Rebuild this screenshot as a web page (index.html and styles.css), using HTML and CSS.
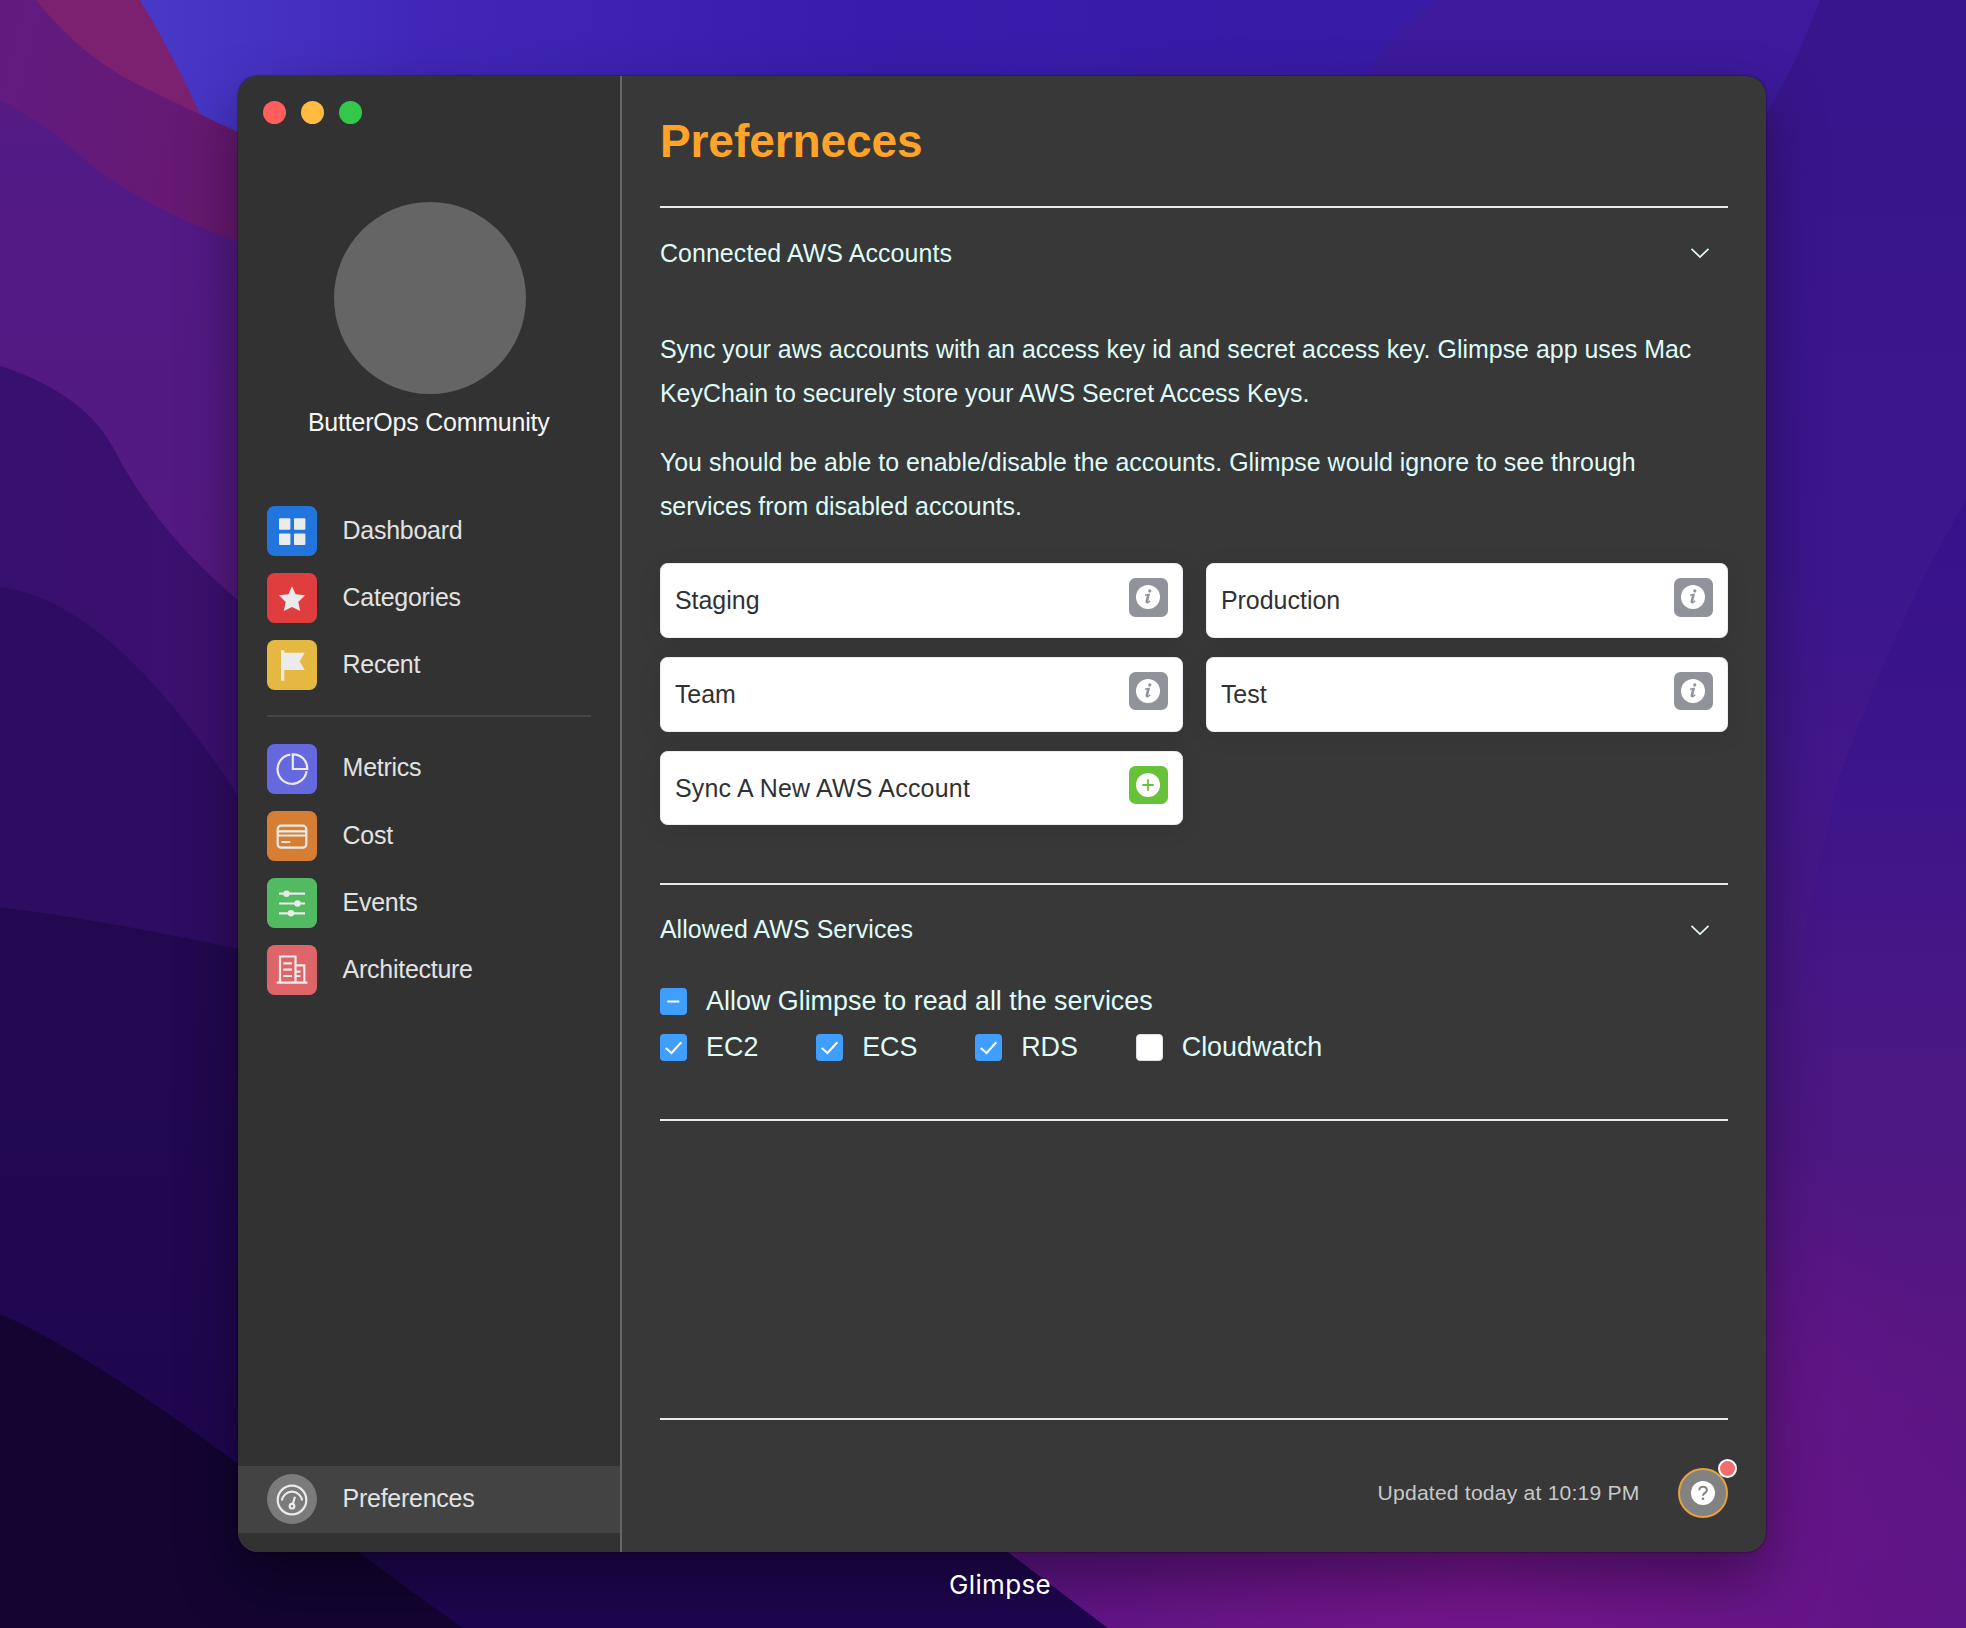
FILE: index.html
```html
<!DOCTYPE html>
<html lang="en">
<head>
<meta charset="utf-8">
<title>Glimpse</title>
<link rel="stylesheet" href="styles.css">
</head>
<body>
<svg class="wallpaper" viewBox="0 0 1966 1628" preserveAspectRatio="none" aria-hidden="true">
  <defs>
    <linearGradient id="sky" x1="0" x2="1" y1="0" y2="0">
      <stop offset="0" stop-color="#4a3acb"/><stop offset=".08" stop-color="#4838c8"/><stop offset=".22" stop-color="#4126b8"/><stop offset=".45" stop-color="#381cac"/><stop offset=".7" stop-color="#371ba6"/><stop offset="1" stop-color="#371ba6"/>
    </linearGradient>
    <linearGradient id="right" gradientUnits="userSpaceOnUse" x1="0" x2="0" y1="0" y2="1628">
      <stop offset="0" stop-color="#38158c"/><stop offset=".35" stop-color="#3c168c"/><stop offset=".5" stop-color="#431789"/><stop offset=".7" stop-color="#4c1782"/><stop offset=".84" stop-color="#5a1683"/><stop offset="1" stop-color="#601487"/>
    </linearGradient>
    <linearGradient id="fold" x1="0" x2="1" y1="0" y2="0">
      <stop offset="0" stop-color="#38138a" stop-opacity=".9"/><stop offset="1" stop-color="#38138a" stop-opacity=".7"/>
    </linearGradient>
    <linearGradient id="foldFade" gradientUnits="userSpaceOnUse" x1="0" x2="0" y1="500" y2="1000">
      <stop offset="0" stop-color="#38128a"/><stop offset=".45" stop-color="#38128a" stop-opacity=".6"/><stop offset="1" stop-color="#38128a" stop-opacity="0"/>
    </linearGradient>
    <linearGradient id="rose" x1="0" x2="1" y1="0" y2=".6">
      <stop offset="0" stop-color="#611b80"/><stop offset="1" stop-color="#691868"/>
    </linearGradient>
    <linearGradient id="violet" x1="0" x2="0" y1="0" y2="1">
      <stop offset="0" stop-color="#601b7e"/><stop offset=".2" stop-color="#521a86"/><stop offset="1" stop-color="#55187e"/>
    </linearGradient>
    <linearGradient id="indigo" x1="0" x2="1" y1="0" y2="0">
      <stop offset="0" stop-color="#38106e"/><stop offset="1" stop-color="#3d1070"/>
    </linearGradient>
    <linearGradient id="deep" x1="0" x2="0" y1="0" y2="1">
      <stop offset="0" stop-color="#22094f"/><stop offset="1" stop-color="#1e0650"/>
    </linearGradient>
    <radialGradient id="glow" gradientUnits="userSpaceOnUse" cx="1480" cy="1560" r="520">
      <stop offset="0" stop-color="#78158f"/><stop offset=".5" stop-color="#6d168a" stop-opacity=".7"/><stop offset="1" stop-color="#621487" stop-opacity="0"/>
    </radialGradient>
  </defs>
  <rect width="1966" height="1628" fill="url(#sky)"/>
  <path d="M1438 0Q1390 30 1366 78V300H1966V0Z" fill="#3c1a9b"/>
  <path d="M1820 0Q1800 55 1772 104L1700 240V1628H1966V0Z" fill="url(#right)"/>
  <path d="M1966 500Q1900 610 1838 780L1790 1000H1966Z" fill="url(#foldFade)"/>
  <path d="M0 0H140Q175 58 200 114Q300 160 300 300V700H0Z" fill="#7b2170"/>
  <path d="M0 0H36Q80 55 135 83Q190 110 240 133H300V700H0Z" fill="url(#rose)"/>
  <path d="M0 0V100Q40 120 70 146Q125 200 238 242H300V800H0Z" fill="url(#violet)"/>
  <path d="M0 366Q88 394 117 455Q160 535 238 600L300 650V1000H0Z" fill="url(#indigo)"/>
  <path d="M0 587Q110 600 238 796L300 880V1100H0Z" fill="#2e0c62"/>
  <path d="M0 907Q110 921 238 949L1008 1552L1108 1628H0Z" fill="url(#deep)"/>
  <path d="M960 1515L1008 1552L1108 1628H1750V1515Z" fill="url(#right)"/>
  <path d="M960 1515L1008 1552L1108 1628H1966V1040H1100Z" fill="url(#glow)"/>
  <path d="M0 1314Q90 1354 238 1464L358 1552L462 1628H0Z" fill="#130432"/>
</svg>

<div class="window">
  <aside class="sidebar">
    <div class="lights"><span class="light red"></span><span class="light amber"></span><span class="light green"></span></div>
    <div class="avatar"></div>
    <div class="org">ButterOps Community</div>
    <nav class="nav">
      <a class="item"><svg class="icon blue" viewBox="0 0 50 50"><g fill="#ebebeb"><rect x="12" y="12.3" width="11.4" height="11.4" rx="1"/><rect x="27" y="12.3" width="11.4" height="11.4" rx="1"/><rect x="12" y="27.6" width="11.4" height="11.4" rx="1"/><rect x="27" y="27.6" width="11.4" height="11.4" rx="1"/></g></svg><span>Dashboard</span></a>
      <a class="item"><svg class="icon crimson" viewBox="0 0 50 50"><path fill="#ebebeb" d="M25 13.2L28.6 21.3L38 22.3L31.3 29L33.2 38L25 34L16.8 38L18.7 29L12 22.3L21.4 21.3Z"/></svg><span>Categories</span></a>
      <a class="item"><svg class="icon yellow" viewBox="0 0 50 50"><path fill="#ebebeb" d="M14 10.3H17.3V12.7H37.8L32.7 21.3L37.8 30H17.3V40.8H14Z"/></svg><span>Recent</span></a>
    </nav>
    <hr class="divider">
    <nav class="nav">
      <a class="item"><svg class="icon line iris" viewBox="0 0 50 50"><path d="M23.3 10.7A14.6 14.6 0 1 0 39.6 27.2"/><path d="M25.8 10.3V25H40.3C40.3 16.5 34.3 10.3 25.8 10.3Z"/></svg><span>Metrics</span></a>
      <a class="item"><svg class="icon line orange" viewBox="0 0 50 50"><rect x="10.7" y="14.7" width="28.6" height="22" rx="3.5"/><path d="M10.7 20.3H39.3M10.7 24.5H39.3M14.3 31H23.3"/></svg><span>Cost</span></a>
      <a class="item"><svg class="icon line leaf" viewBox="0 0 50 50"><path d="M12 15.7H38M12 25.5H38M12 35.3H38"/><g fill="#ebebeb" stroke="none"><circle cx="19.5" cy="15.7" r="3.2"/><circle cx="30.5" cy="25.5" r="3.2"/><circle cx="24" cy="35.3" r="3.2"/></g></svg><span>Events</span></a>
      <a class="item"><svg class="icon line coral" viewBox="0 0 50 50"><path d="M9.7 37.7H40.3M13 37.7V11.5H28.5V37.7M28.5 20.3H37.3V37.7M16.3 18.3H25M16.3 24.7H25M16.3 31H25M28.5 26.7H33.5M28.5 31H33.5"/></svg><span>Architecture</span></a>
    </nav>
    <a class="item active"><svg class="icon line round" viewBox="0 0 50 50"><circle cx="25" cy="26" r="14.3"/><path d="M14.9 26.5A10.2 10.2 0 0 1 35.1 26.5M28 22.7L25.8 29.9"/><circle cx="25" cy="32.2" r="2.3"/></svg><span>Preferences</span></a>
  </aside>

  <main class="main">
    <h1>Preferneces</h1>
    <section class="panel accounts">
      <header>Connected AWS Accounts<svg class="chevron" viewBox="0 0 20 12"><path d="M1.5 1.8L10 10L18.5 1.8"/></svg></header>
      <div class="copy">
        <p>Sync your aws accounts with an access key id and secret access key. Glimpse app uses Mac<br>KeyChain to securely store your AWS Secret Access Keys.</p>
        <p>You should be able to enable/disable the accounts. Glimpse would ignore to see through<br>services from disabled accounts.</p>
      </div>
      <div class="cards">
        <div class="card"><span>Staging</span><button><svg viewBox="0 0 24 24"><use href="#info"/></svg></button></div>
        <div class="card"><span>Production</span><button><svg viewBox="0 0 24 24"><use href="#info"/></svg></button></div>
        <div class="card"><span>Team</span><button><svg viewBox="0 0 24 24"><use href="#info"/></svg></button></div>
        <div class="card"><span>Test</span><button><svg viewBox="0 0 24 24"><use href="#info"/></svg></button></div>
        <div class="card new"><span>Sync A New AWS Account</span><button class="add"><svg viewBox="0 0 24 24"><circle cx="12" cy="12" r="12" fill="#fff"/><path d="M12 6.3V17.7M6.3 12H17.7" stroke="#67c23a" stroke-width="1.8" fill="none"/></svg></button></div>
      </div>
    </section>
    <section class="panel services">
      <header>Allowed AWS Services<svg class="chevron" viewBox="0 0 20 12"><path d="M1.5 1.8L10 10L18.5 1.8"/></svg></header>
      <div class="checks">
        <label class="check"><svg class="box on" viewBox="0 0 27 27"><path d="M7.3 13.5H19.3"/></svg>Allow Glimpse to read all the services</label>
      </div>
      <div class="checks">
        <label class="check"><svg class="box on" viewBox="0 0 27 27"><path d="M5.8 14L11.5 19L21.3 8.3"/></svg>EC2</label>
        <label class="check"><svg class="box on" viewBox="0 0 27 27"><path d="M5.8 14L11.5 19L21.3 8.3"/></svg>ECS</label>
        <label class="check"><svg class="box on" viewBox="0 0 27 27"><path d="M5.8 14L11.5 19L21.3 8.3"/></svg>RDS</label>
        <label class="check"><svg class="box" viewBox="0 0 27 27"></svg>Cloudwatch</label>
      </div>
    </section>
    <div class="rule"></div>
    <footer class="footer">
      <span class="updated">Updated today at 10:19 PM</span>
      <div class="help">
        <svg viewBox="0 0 24 24"><circle cx="12" cy="12" r="12" fill="#fff"/><path d="M8.3 9.3C8.3 4.3 15.9 4.6 15.9 9.3C15.9 12 12 11.9 12 14.7" fill="none" stroke="#828282" stroke-width="2"/><circle cx="12" cy="17.7" r="1.3" fill="#828282"/></svg>
        <span class="badge"></span>
      </div>
    </footer>
  </main>
</div>
<div class="caption">Glimpse</div>

<svg class="sprite" aria-hidden="true">
  <symbol id="info" viewBox="0 0 24 24">
    <circle cx="12" cy="12" r="12" fill="#fff"/>
    <circle cx="13.8" cy="5.9" r="1.6" fill="#909399"/>
    <path d="M9 10.4Q11 9.6 13.1 9.4L11.1 17.4Q11.200 18.500 14.200 15.800" fill="none" stroke="#909399" stroke-width="1.5"/>
    <path d="M12.300 9.600L10.300 17.800" stroke="#909399" stroke-width="2.200"/>
  </symbol>
</svg>
</body>
</html>
```
FILE: styles.css
```css
* { box-sizing: border-box; }
body {
  margin: 0;
  width: 1966px;
  height: 1628px;
  overflow: hidden;
  padding: 76px 200px 0 238px;
  font: 24.96px/44.2px "Liberation Sans", Arial, sans-serif;
  background: #371ba6;
}
svg { display: block; }
.sprite { position: absolute; width: 0; height: 0; }
.wallpaper { position: absolute; left: 0; top: 0; width: 1966px; height: 1628px; z-index: -1; }

.window {
  display: flex;
  height: 1476px;
  border-radius: 20px;
  overflow: hidden;
  background: #383838;
  box-shadow: 0 0 2px rgba(0,0,0,.7), 0 28px 60px rgba(0,0,0,.4);
}

/* Sidebar */
.sidebar {
  flex: none;
  display: flex;
  flex-direction: column;
  width: 383.5px;
  padding: 25px 0 19px;
  background: #323232;
  border-right: 2px solid #656565;
}
.lights { display: flex; gap: 15.3px; padding-left: 24.8px; }
.light { width: 23px; height: 23px; border-radius: 50%; }
.red { background: #ff5f5a; }
.amber { background: #ffbc40; }
.green { background: #34c84a; }
.avatar { width: 192px; height: 192px; margin: 78px 0 0 96px; border-radius: 50%; background: #656565; }
.org { margin-top: 6px; text-align: center; letter-spacing: -.2px; color: #f6f6f6; }
.nav { display: flex; flex-direction: column; }
.org + .nav { margin-top: 53.5px; }
.item { display: flex; align-items: center; gap: 26px; height: 67.1px; padding-left: 28.6px; letter-spacing: -.25px; color: #e2e2e2; }
.item span { padding-bottom: 2px; }
.icon { width: 50px; height: 50px; border-radius: 7.7px; flex: none; }
.blue { background: #2275dc; }
.crimson { background: #e03d3f; }
.yellow { background: #e5b842; }
.iris { background: #6669de; }
.orange { background: #d67e34; }
.leaf { background: #52bb62; }
.coral { background: #df6668; }
.line { fill: none; stroke: #ebebeb; stroke-width: 2.2; }
.round { border-radius: 50%; background: #7b7b7b; }
.divider { width: 324px; height: 2px; margin: 16.5px 0 17.5px 28.6px; border: 0; background: #464646; }
.active { margin-top: auto; background: #434343; }

/* Content */
.main { flex: 1; display: flex; flex-direction: column; padding: 38px 38.4px 34px; color: #dffcf9; }
h1 { margin: 0 0 38px; font-size: 46.08px; line-height: 54px; letter-spacing: -.1px; color: #ffa428; }
.panel { border-top: 2px solid #e8ebee; }
.panel header { display: flex; align-items: center; justify-content: space-between; height: 90px; padding-right: 17.4px; letter-spacing: .08px; }
.chevron { width: 20px; height: 12px; fill: none; stroke: #dffcf9; stroke-width: 1.7; }
.copy { margin: 29px 0 34.6px; white-space: nowrap; }
.copy p { margin: 0; }
.copy p + p { margin-top: 24.6px; }
.cards { display: grid; grid-template-columns: 523px 1fr; gap: 19.2px 23px; }
.card {
  display: flex;
  justify-content: space-between;
  align-items: center;
  height: 74.7px;
  padding: 0 14px;
  border: 1px solid #ebeef5;
  border-radius: 7.7px;
  background: #fff;
  color: #303133;
  box-shadow: 0 4px 23px rgba(0,0,0,.08);
}
.card.new { letter-spacing: .22px; }
.card button {
  align-self: flex-start;
  display: flex;
  justify-content: center;
  align-items: center;
  width: 38.5px;
  height: 38.5px;
  margin-top: 14px;
  padding: 0 1px 0.5px 0;
  border: 0;
  border-radius: 6.5px;
  background: #909399;
}
.card .add { background: #67c23a; }
.card svg { width: 24px; height: 24px; }
.accounts { height: 676.6px; }
.services { height: 236px; }
.checks { display: flex; gap: 57.6px; height: 27px; margin: 13.4px 0 19px; font-size: 26.88px; line-height: 27px; }
.check { display: flex; align-items: center; gap: 19.2px; white-space: nowrap; }
.box { width: 27px; height: 27px; border-radius: 4px; background: #fff; border: 1.5px solid #dcdfe6; fill: none; stroke: #fff; stroke-width: 2; }
.on { border: 0; background: #409eff; }
.rule { height: 2px; background: #e8ebee; }
.footer { display: flex; align-items: center; justify-content: flex-end; gap: 38px; margin-top: auto; padding-top: 48px; border-top: 2px solid #e8ebee; }
.updated { font-size: 21.12px; line-height: 30px; letter-spacing: .2px; color: #c8c8c8; }
.help { position: relative; display: flex; align-items: center; justify-content: center; width: 50px; height: 50px; border: 2px solid #e6a23c; border-radius: 50%; background: #828282; }
.help svg { width: 24px; height: 24px; margin-top: -1px; }
.badge { position: absolute; right: -11.5px; top: -11.5px; width: 19px; height: 19px; border: 2px solid #fff; border-radius: 50%; background: #f56c6c; }

.caption { margin-top: 16px; width: 1524px; text-align: center; font: 400 26px/34px Inter, sans-serif; letter-spacing: .35px; color: #fff; }
```
